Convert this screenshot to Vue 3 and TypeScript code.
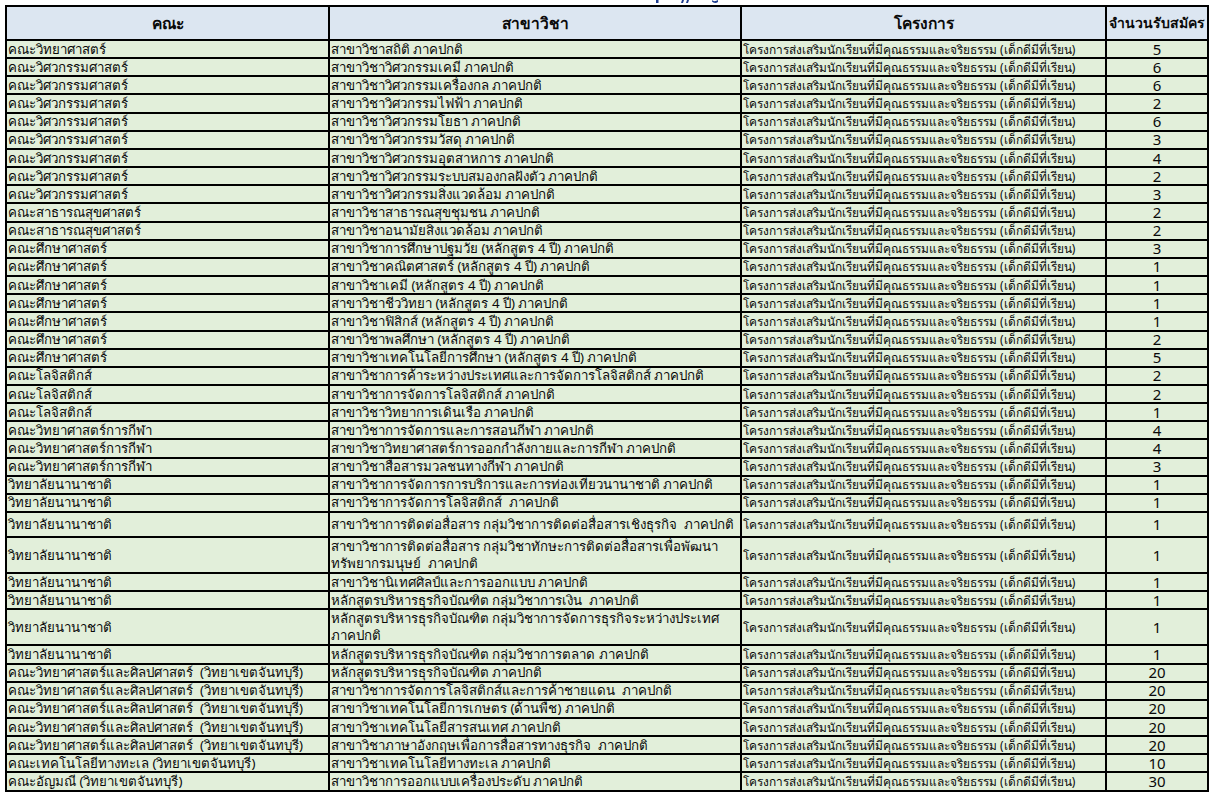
<script setup lang="ts">
interface Row { f: string; m: string; n: number; h?: number }
const A = 'คณะวิทยาศาสตร์', E = 'คณะวิศวกรรมศาสตร์', P = 'คณะสาธารณสุขศาสตร์', D = 'คณะศึกษาศาสตร์', L = 'คณะโลจิสติกส์', S = 'คณะวิทยาศาสตร์การกีฬา', C = 'วิทยาลัยนานาชาติ', R = 'คณะวิทยาศาสตร์และศิลปศาสตร์  (วิทยาเขตจันทบุรี)'
const project = 'โครงการส่งเสริมนักเรียนที่มีคุณธรรมและจริยธรรม (เด็กดีมีที่เรียน)'
const rows: Row[] = [
  { f: A, m: 'สาขาวิชาสถิติ ภาคปกติ', n: 5 },
  { f: E, m: 'สาขาวิชาวิศวกรรมเคมี ภาคปกติ', n: 6 },
  { f: E, m: 'สาขาวิชาวิศวกรรมเครื่องกล ภาคปกติ', n: 6 },
  { f: E, m: 'สาขาวิชาวิศวกรรมไฟฟ้า ภาคปกติ', n: 2 },
  { f: E, m: 'สาขาวิชาวิศวกรรมโยธา ภาคปกติ', n: 6 },
  { f: E, m: 'สาขาวิชาวิศวกรรมวัสดุ ภาคปกติ', n: 3 },
  { f: E, m: 'สาขาวิชาวิศวกรรมอุตสาหการ ภาคปกติ', n: 4 },
  { f: E, m: 'สาขาวิชาวิศวกรรมระบบสมองกลฝังตัว ภาคปกติ', n: 2 },
  { f: E, m: 'สาขาวิชาวิศวกรรมสิ่งแวดล้อม ภาคปกติ', n: 3 },
  { f: P, m: 'สาขาวิชาสาธารณสุขชุมชน ภาคปกติ', n: 2 },
  { f: P, m: 'สาขาวิชาอนามัยสิ่งแวดล้อม ภาคปกติ', n: 2 },
  { f: D, m: 'สาขาวิชาการศึกษาปฐมวัย (หลักสูตร 4 ปี) ภาคปกติ', n: 3 },
  { f: D, m: 'สาขาวิชาคณิตศาสตร์ (หลักสูตร 4 ปี) ภาคปกติ', n: 1 },
  { f: D, m: 'สาขาวิชาเคมี (หลักสูตร 4 ปี) ภาคปกติ', n: 1 },
  { f: D, m: 'สาขาวิชาชีววิทยา (หลักสูตร 4 ปี) ภาคปกติ', n: 1 },
  { f: D, m: 'สาขาวิชาฟิสิกส์ (หลักสูตร 4 ปี) ภาคปกติ', n: 1 },
  { f: D, m: 'สาขาวิชาพลศึกษา (หลักสูตร 4 ปี) ภาคปกติ', n: 2 },
  { f: D, m: 'สาขาวิชาเทคโนโลยีการศึกษา (หลักสูตร 4 ปี) ภาคปกติ', n: 5 },
  { f: L, m: 'สาขาวิชาการค้าระหว่างประเทศและการจัดการโลจิสติกส์ ภาคปกติ', n: 2 },
  { f: L, m: 'สาขาวิชาการจัดการโลจิสติกส์ ภาคปกติ', n: 2 },
  { f: L, m: 'สาขาวิชาวิทยาการเดินเรือ ภาคปกติ', n: 1 },
  { f: S, m: 'สาขาวิชาการจัดการและการสอนกีฬา ภาคปกติ', n: 4 },
  { f: S, m: 'สาขาวิชาวิทยาศาสตร์การออกกำลังกายและการกีฬา ภาคปกติ', n: 4 },
  { f: S, m: 'สาขาวิชาสื่อสารมวลชนทางกีฬา ภาคปกติ', n: 3 },
  { f: C, m: 'สาขาวิชาการจัดการการบริการและการท่องเที่ยวนานาชาติ ภาคปกติ', n: 1 },
  { f: C, m: 'สาขาวิชาการจัดการโลจิสติกส์  ภาคปกติ', n: 1 },
  { f: C, m: 'สาขาวิชาการติดต่อสื่อสาร กลุ่มวิชาการติดต่อสื่อสารเชิงธุรกิจ  ภาคปกติ', n: 1, h: 25 },
  { f: C, m: 'สาขาวิชาการติดต่อสื่อสาร กลุ่มวิชาทักษะการติดต่อสื่อสารเพื่อพัฒนา\nทรัพยากรมนุษย์  ภาคปกติ', n: 1, h: 36 },
  { f: C, m: 'สาขาวิชานิเทศศิลป์และการออกแบบ ภาคปกติ', n: 1 },
  { f: C, m: 'หลักสูตรบริหารธุรกิจบัณฑิต กลุ่มวิชาการเงิน  ภาคปกติ', n: 1 },
  { f: C, m: 'หลักสูตรบริหารธุรกิจบัณฑิต กลุ่มวิชาการจัดการธุรกิจระหว่างประเทศ\nภาคปกติ', n: 1, h: 36 },
  { f: C, m: 'หลักสูตรบริหารธุรกิจบัณฑิต กลุ่มวิชาการตลาด ภาคปกติ', n: 1 },
  { f: R, m: 'หลักสูตรบริหารธุรกิจบัณฑิต ภาคปกติ', n: 20 },
  { f: R, m: 'สาขาวิชาการจัดการโลจิสติกส์และการค้าชายแดน  ภาคปกติ', n: 20 },
  { f: R, m: 'สาขาวิชาเทคโนโลยีการเกษตร (ด้านพืช) ภาคปกติ', n: 20 },
  { f: R, m: 'สาขาวิชาเทคโนโลยีสารสนเทศ ภาคปกติ', n: 20 },
  { f: R, m: 'สาขาวิชาภาษาอังกฤษเพื่อการสื่อสารทางธุรกิจ  ภาคปกติ', n: 20 },
  { f: 'คณะเทคโนโลยีทางทะเล (วิทยาเขตจันทบุรี)', m: 'สาขาวิชาเทคโนโลยีทางทะเล ภาคปกติ', n: 10 },
  { f: 'คณะอัญมณี (วิทยาเขตจันทบุรี)', m: 'สาขาวิชาการออกแบบเครื่องประดับ ภาคปกติ', n: 30 },
]
</script>

<template>
  <div class="page">
    <svg class="clipped-title" width="80" height="4" viewBox="0 0 80 4" aria-hidden="true">
      <path d="M5 0h2.500v3H5zM31 0h2l-1 3h-2zM36 0h2l-1 3h-2zM61 0c1 1.500 4 1.500 6 0v2c-2 1.500-5 1-6-.5z" fill="#1f3d8f" />
    </svg>
    <table class="sheet">
      <colgroup>
        <col class="c1" /><col class="c2" /><col class="c3" /><col class="c4" />
      </colgroup>
      <thead>
        <tr>
          <th class="big">คณะ</th>
          <th class="big">สาขาวิชา</th>
          <th class="big">โครงการ</th>
          <th class="small">จำนวนรับสมัคร</th>
        </tr>
      </thead>
      <tbody>
        <tr
          v-for="(r, i) in rows"
          :key="i"
          :class="{ tall: r.h === 36 }"
          :style="r.h ? { height: r.h + 'px' } : undefined"
        >
          <td>{{ r.f }}</td>
          <td>{{ r.m }}</td>
          <td class="proj">{{ project }}</td>
          <td class="num">{{ r.n }}</td>
        </tr>
      </tbody>
    </table>
  </div>
</template>

<style>
html, body { margin: 0; background: #fff; overflow: hidden; }
</style>

<style scoped>
.page { position: relative; padding: 5px 0 0 5px; height: 791px; overflow: hidden; }
.clipped-title { position: absolute; left: 651px; top: 0; }
.sheet {
  border-collapse: collapse;
  table-layout: fixed;
  width: 1202px;
  font-family: "Noto Sans", "DejaVu Sans", sans-serif;
  color: #0a0a0a;
  border: 2px solid #000;
}
.c1 { width: 323px; }
.c2 { width: 412px; }
.c3 { width: 365px; }
.c4 { width: 102px; }
th {
  height: 32px;
  background: #dce6f1;
  border: 2px solid #000;
  padding: 0;
  font-weight: 700;
  text-align: center;
  font-size: 15.5px;
  line-height: 16px;
}
th.small { font-size: 14px; white-space: nowrap; }
tr { height: 18.17px; }
td {
  background: #e2efda;
  border: 2px solid #000;
  padding: 0 1px;
  font-size: 13.3px;
  line-height: 15px;
  vertical-align: middle;
  white-space: pre-wrap;
  overflow: hidden;
}
.tall td { line-height: 17px; }
td.proj { font-size: 11.9px; white-space: pre; }
td.num { text-align: center; font-size: 15px; }
</style>
